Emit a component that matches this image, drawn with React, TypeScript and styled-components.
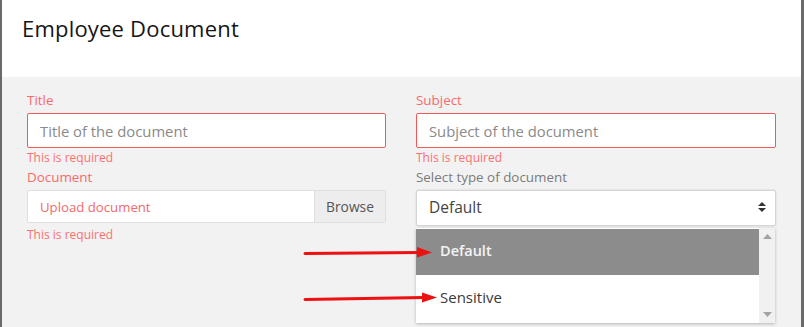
import React from 'react';
import styled, { createGlobalStyle } from 'styled-components';

const GlobalStyle = createGlobalStyle`
  html, body {
    margin: 0;
    padding: 0;
    background: #6a6a6a;
    font-family: 'Open Sans', 'Lato', sans-serif;
  }
  * {
    box-sizing: border-box;
  }
`;

const Page = styled.div`
  position: relative;
  width: 804px;
  height: 327px;
  overflow: hidden;
  background: #6a6a6a;
`;

const Modal = styled.div`
  margin-left: 2px;
  width: 799px;
  height: 327px;
  background: #f2f2f2;
`;

const Header = styled.div`
  height: 77px;
  background: #ffffff;
  padding: 14px 20px 0;
`;

const Heading = styled.h2`
  margin: 0;
  font-size: 22px;
  line-height: 28px;
  font-weight: 400;
  color: #151515;
  letter-spacing: 0.2px;
`;

const Body = styled.div`
  display: grid;
  grid-template-columns: 359px 360px;
  column-gap: 30px;
  padding: 15px 0 0 25px;
`;

const Column = styled.div`
  position: relative;
  display: flex;
  flex-direction: column;
`;

const Label = styled.label<{ $muted?: boolean; $gap?: number }>`
  font-size: 13.4px;
  line-height: 16px;
  margin-top: ${p => p.$gap ?? 0}px;
  margin-bottom: 5px;
  color: ${p => (p.$muted ? '#7b7b7b' : '#f76a6a')};
`;

const TextInput = styled.input`
  height: 35px;
  padding: 0 12px;
  border: 1px solid #f25a5a;
  border-radius: 2px;
  background: #fff;
  font-family: inherit;
  font-size: 14.8px;
  outline: none;
  &::placeholder {
    color: #8a8a8a;
  }
`;

const ErrorText = styled.div<{ $gap?: number }>`
  font-size: 12px;
  line-height: 16px;
  margin-top: ${p => p.$gap ?? 2}px;
  color: #ff7070;
`;

const FileGroup = styled.div`
  display: flex;
  height: 33px;
  border: 1px solid #dedede;
  border-radius: 2px;
  background: #fff;
`;

const FileText = styled.div`
  flex: 1;
  display: flex;
  align-items: center;
  padding-left: 12px;
  font-size: 13.2px;
  color: #f06a6a;
`;

const BrowseButton = styled.div`
  width: 71px;
  display: flex;
  align-items: center;
  justify-content: center;
  background: #ededed;
  border-left: 1px solid #dedede;
  font-size: 13.8px;
  color: #555;
`;

const SelectBox = styled.div`
  height: 36px;
  display: flex;
  align-items: center;
  justify-content: space-between;
  padding: 0 8px 2px 12px;
  background: #fff;
  border: 1px solid #d4d4d4;
  border-radius: 2px;
  box-shadow: 0 0 2px rgba(0, 0, 0, 0.15);
  font-size: 15.5px;
  color: #444;
`;

const Menu = styled.div`
  position: absolute;
  top: 136px;
  left: 0;
  width: 359px;
  height: 95px;
  display: flex;
  background: #fff;
  box-shadow: 0 1px 3px rgba(0, 0, 0, 0.25);
`;

const OptionList = styled.div`
  flex: 1;
  display: flex;
  flex-direction: column;
  padding-top: 1px;
`;

const Option = styled.div<{ $active?: boolean }>`
  height: 46px;
  display: flex;
  align-items: center;
  padding-left: 24px;
  padding-bottom: 3px;
  font-size: ${p => (p.$active ? 14.5 : 15)}px;
  font-weight: ${p => (p.$active ? 600 : 400)};
  color: ${p => (p.$active ? '#f4f4f4' : '#3a3a3a')};
  background: ${p => (p.$active ? '#8c8c8c' : '#fff')};
`;

const Scrollbar = styled.div`
  width: 16px;
  display: flex;
  flex-direction: column;
  justify-content: space-between;
  align-items: center;
  padding: 6px 0 6px;
  background: #f1f1f1;
`;

const Annotations = styled.svg`
  position: absolute;
  left: 0;
  top: 0;
  pointer-events: none;
`;

const SortIcon = () => (
  <svg width="10" height="12" viewBox="0 0 10 12">
    <path d="M5 1 L9 5 L1 5 Z" fill="#333" />
    <path d="M5 11 L9 7 L1 7 Z" fill="#333" />
  </svg>
);

const Tri = ({ down }: { down?: boolean }) => (
  <svg width="9" height="5" viewBox="0 0 9 5">
    <path d={down ? 'M0 0 H9 L4.5 5 Z' : 'M0 5 H9 L4.5 0 Z'} fill="#a3a3a3" />
  </svg>
);

const App: React.FC = () => {
  return (
    <Page>
      <GlobalStyle />
      <Modal>
        <Header>
          <Heading>Employee Document</Heading>
        </Header>
        <Body>
          <Column>
            <Label>Title</Label>
            <TextInput placeholder="Title of the document" />
            <ErrorText>This is required</ErrorText>
            <Label $gap={3}>Document</Label>
            <FileGroup>
              <FileText>Upload document</FileText>
              <BrowseButton>Browse</BrowseButton>
            </FileGroup>
            <ErrorText $gap={4}>This is required</ErrorText>
          </Column>
          <Column>
            <Label>Subject</Label>
            <TextInput placeholder="Subject of the document" />
            <ErrorText>This is required</ErrorText>
            <Label $gap={3} $muted>
              Select type of document
            </Label>
            <SelectBox>
              <span>Default</span>
              <SortIcon />
            </SelectBox>
            <Menu>
              <OptionList>
                <Option $active>Default</Option>
                <Option>Sensitive</Option>
              </OptionList>
              <Scrollbar>
                <Tri />
                <Tri down />
              </Scrollbar>
            </Menu>
          </Column>
        </Body>
      </Modal>
      <Annotations width="804" height="327" viewBox="0 0 804 327">
        <path d="M305 253.5 L420 252.5" stroke="#ee1111" strokeWidth="3" strokeLinecap="round" />
        <path d="M417 247 L432 252.5 L417 257.5 Z" fill="#ee1111" />
        <path d="M305 299.5 L424 297.5" stroke="#ee1111" strokeWidth="3" strokeLinecap="round" />
        <path d="M422 292.5 L437 297.5 L422 302.5 Z" fill="#ee1111" />
      </Annotations>
    </Page>
  );
};

export default App;
